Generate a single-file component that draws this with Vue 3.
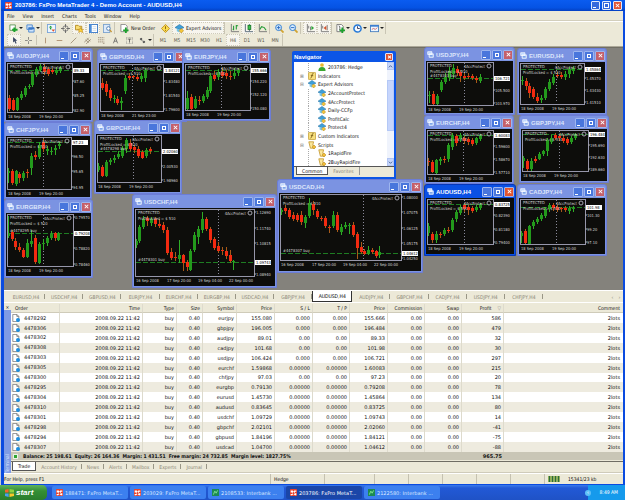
<script setup>
const menus = ['File', 'View', 'Insert', 'Charts', 'Tools', 'Window', 'Help']

const toolGroups = [
  [
    { icon: 'newchart', label: 'New chart', drop: true },
    { icon: 'profiles', label: 'Profiles', drop: true },
  ],
  [
    { icon: 'market', label: 'Market Watch' },
    { icon: 'target', label: 'Data Window' },
    { icon: 'folder', label: 'Navigator', on: true },
    { icon: 'terminal', label: 'Terminal', on: true },
    { icon: 'tester', label: 'Strategy Tester' },
  ],
  [
    { icon: 'order', label: 'New Order', text: 'New Order' },
    { icon: 'diamond', label: 'MetaEditor' },
    { icon: 'expert', label: 'Expert Advisors', text: 'Expert Advisors', on: true },
  ],
  [
    { icon: 'bars', label: 'Bar chart' },
    { icon: 'candles', label: 'Candlesticks', on: true },
    { icon: 'line', label: 'Line chart' },
  ],
  [
    { icon: 'zoomin', label: 'Zoom in' },
    { icon: 'zoomout', label: 'Zoom out' },
  ],
  [
    { icon: 'scroll', label: 'Auto scroll', on: true },
    { icon: 'shift', label: 'Chart shift', on: true },
  ],
  [
    { icon: 'indicator', label: 'Indicators', drop: true },
    { icon: 'clock', label: 'Periods', drop: true },
    { icon: 'template', label: 'Templates', drop: true },
  ],
]

const drawTools = [
  { icon: 'cursor', label: 'Cursor', on: true },
  { icon: 'cross', label: 'Crosshair' },
  { icon: 'sep' },
  { icon: 'vline', label: 'Vertical line' },
  { icon: 'hline', label: 'Horizontal line' },
  { icon: 'trend', label: 'Trendline' },
  { icon: 'channel', label: 'Equidistant channel' },
  { icon: 'fibo', label: 'Fibonacci' },
  { icon: 'text', label: 'Text' },
  { icon: 'label', label: 'Text label' },
  { icon: 'arrows', label: 'Arrows', drop: true },
]
const periods = ['M1', 'M5', 'M15', 'M30', 'H1', 'H4', 'D1', 'W1', 'MN']

// Candle: [x, high, body top, body bottom, low, rising]
const rally = [
  [2, 32, 35, 46, 48, 0], [6, 35, 37, 47, 48, 0], [10, 34, 35, 47, 48, 1], [14, 28, 31, 35, 37, 1],
  [18, 23, 25, 32, 34, 1], [22, 21, 23, 24, 26, 1], [25, 9, 11, 22, 24, 1], [29, 4, 6, 12, 14, 1],
  [33, 1, 3, 7, 9, 1], [37, 1, 4, 9, 12, 0], [41, 4, 6, 11, 13, 0], [45, 5, 7, 9, 11, 0],
  [49, 4, 7, 10, 12, 1], [53, 3, 5, 8, 10, 1],
]

const charts = [
  { name: 'AUDJPY', x: 4, y: 48, w: 89, h: 74, pw: 66, ph: 49, v: 36, q: 7, price: '89.33', labels: ['', '87.60', '85.25', '82.90'], dates: ['18 Sep 2008', '19 Sep 20:00'], candles: rally },
  { name: 'GBPUSD', x: 97, y: 49, w: 90, h: 73, pw: 64, ph: 47, v: 32, q: 6, price: '1.84121', labels: ['', '1.83480', '1.81540', '1.79600'], dates: ['18 Sep 2008', '21 Sep 23:00'],
    candles: [[2, 14, 19, 24, 26, 0], [6, 17, 20, 28, 32, 0], [10, 24, 26, 34, 37, 0], [14, 31, 34, 35, 39, 1], [17, 32, 35, 39, 41, 0], [21, 33, 37, 39, 46, 1], [25, 11, 14, 27, 30, 1], [29, 9, 12, 14, 16, 0], [33, 11, 12, 13, 15, 0], [37, 10, 13, 15, 17, 0], [41, 9, 12, 15, 18, 1], [45, 4, 6, 14, 18, 1]] },
  { name: 'EURJPY', x: 182, y: 49, w: 89, h: 72, pw: 66, ph: 46, v: 36, q: 6, price: '155.666', labels: ['', '154.220', '152.120', '150.080'], dates: ['18 Sep 2008', '19 Sep 20:00'],
    candles: [[2, 27, 34, 45, 47, 1], [6, 30, 33, 45, 46, 0], [10, 32, 35, 44, 45, 1], [14, 32, 36, 37, 41, 0], [18, 30, 32, 37, 39, 1], [22, 23, 26, 33, 35, 1], [25, 9, 12, 27, 29, 1], [29, 7, 11, 15, 17, 0], [33, 5, 8, 13, 16, 1], [37, 4, 8, 12, 14, 0], [41, 6, 9, 12, 15, 0], [45, 7, 12, 13, 16, 0], [49, 4, 9, 12, 15, 1], [53, 4, 6, 9, 12, 1]] },
  { name: 'USDJPY', x: 424, y: 47, w: 91, h: 68, pw: 67, ph: 43, v: 37, q: 16, price: '106.721', tag: '#4478303 buy', labels: ['', '', '105.500', '103.970'], dates: ['18 Sep 2008', '19 Sep 20:00'],
    candles: [[2, 29, 33, 34, 41, 1], [6, 29, 32, 42, 43, 0], [10, 32, 34, 42, 43, 1], [14, 18, 20, 28, 30, 1], [18, 11, 15, 20, 22, 1], [22, 5, 9, 16, 19, 1], [26, 2, 6, 12, 16, 1], [30, 4, 7, 11, 14, 0], [33, 8, 10, 14, 20, 0], [37, 11, 14, 16, 18, 0], [41, 11, 14, 15, 17, 0], [45, 12, 14, 16, 18, 0], [49, 14, 16, 18, 21, 0], [53, 12, 15, 19, 21, 1]] },
  { name: 'EURUSD', x: 517, y: 48, w: 90, h: 67, pw: 65, ph: 41, v: 36, q: 6, price: '1.45864', labels: ['', '1.45370', '1.43430', '1.41510'], dates: ['18 Sep 2008', '19 Sep 20:00'],
    candles: [[2, 13, 17, 18, 22, 1], [6, 15, 18, 23, 27, 0], [9, 20, 23, 30, 35, 0], [13, 24, 26, 34, 36, 0], [17, 30, 34, 38, 40, 0], [21, 32, 35, 37, 40, 1], [25, 24, 26, 35, 37, 1], [29, 16, 19, 26, 28, 1], [33, 11, 14, 20, 22, 1], [37, 9, 12, 13, 15, 0], [41, 9, 12, 14, 16, 0], [45, 8, 11, 14, 17, 1], [49, 4, 6, 11, 15, 1], [53, 3, 5, 8, 11, 1]] },
  { name: 'CHFJPY', x: 4, y: 122, w: 88, h: 77, pw: 65, ph: 52, v: 36, q: 5, price: '97.23', labels: ['', '96.50', '95.65', '94.95'], dates: ['18 Sep 2008', '19 Sep 20:00'],
    candles: [[1, 31, 34, 36, 46, 1], [5, 32, 34, 46, 48, 0], [9, 33, 34, 47, 49, 1], [12, 35, 37, 41, 46, 0], [16, 34, 36, 41, 44, 1], [20, 32, 35, 36, 41, 0], [24, 16, 19, 31, 38, 1], [28, 14, 18, 20, 23, 0], [32, 5, 8, 20, 22, 1], [36, 2, 5, 12, 15, 0], [40, 9, 12, 14, 18, 1], [44, 10, 14, 15, 18, 1], [48, 8, 11, 13, 18, 1], [52, 5, 7, 9, 12, 1]] },
  { name: 'GBPCHF', x: 94, y: 120, w: 88, h: 74, pw: 65, ph: 47, v: 36, q: 16, price: '2.02060', tag: '#4478298 buy', labels: ['', '', '2.00530', '1.98960'], dates: ['18 Sep 2008', '19 Sep 20:00'],
    candles: [[1, 28, 31, 35, 37, 1], [5, 30, 32, 41, 42, 0], [9, 25, 27, 41, 42, 1], [13, 23, 25, 27, 30, 1], [17, 20, 23, 25, 28, 1], [21, 16, 19, 22, 24, 1], [25, 11, 13, 21, 23, 1], [29, 3, 5, 14, 18, 1], [33, 4, 8, 14, 16, 0], [37, 10, 12, 15, 18, 0], [41, 11, 14, 21, 23, 0], [45, 15, 17, 23, 24, 0], [49, 13, 15, 21, 23, 1], [53, 12, 14, 16, 19, 0]] },
  { name: 'EURGBP', x: 4, y: 199, w: 89, h: 79, pw: 67, ph: 52, v: 36, q: 19, price: '0.79208', tag: '#4478295 buy', labels: ['0.79570', '', '0.78820', '0.78460'], dates: ['18 Sep 2008', '19 Sep 20:00'],
    candles: [[1, 2, 19, 22, 24, 1], [5, 16, 18, 25, 27, 0], [8, 24, 27, 33, 36, 0], [12, 29, 33, 36, 38, 0], [16, 34, 36, 43, 44, 0], [20, 25, 29, 43, 44, 1], [24, 16, 27, 30, 33, 1], [28, 21, 24, 48, 50, 0], [32, 28, 30, 49, 50, 1], [36, 25, 29, 30, 36, 1], [40, 22, 24, 29, 32, 1], [44, 17, 20, 24, 26, 1], [48, 18, 19, 24, 27, 0], [51, 18, 19, 26, 27, 1]] },
  { name: 'USDCHF', x: 132, y: 194, w: 145, h: 94, pw: 120, ph: 67, v: 83, q: 53, price: '1.09743', tag: '#4478301 buy', labels: ['1.12690', '1.11740', '1.10815', '', '1.08940'], dates: ['16 Sep 2008', '17 Sep 20:00', '19 Sep 04:00', '22 Sep 00:00'],
    candles: [[1, 30, 32, 36, 39, 1], [4, 16, 18, 32, 34, 1], [8, 7, 10, 18, 20, 1], [12, 7, 9, 12, 17, 0], [16, 8, 10, 14, 17, 1], [20, 8, 10, 15, 18, 0], [24, 10, 15, 17, 19, 0], [28, 13, 16, 21, 24, 0], [32, 18, 21, 44, 46, 0], [36, 39, 43, 49, 51, 0], [40, 43, 48, 49, 52, 0], [44, 31, 46, 50, 54, 1], [48, 45, 46, 54, 62, 0], [52, 51, 53, 58, 62, 0], [55, 40, 42, 61, 62, 1], [59, 23, 26, 41, 43, 1], [63, 17, 20, 28, 35, 1], [67, 3, 10, 21, 24, 1], [71, 8, 10, 20, 22, 0], [75, 18, 20, 31, 34, 0], [79, 28, 30, 39, 41, 0], [83, 33, 37, 42, 44, 0], [87, 38, 41, 42, 46, 0], [91, 38, 42, 47, 50, 0], [95, 41, 46, 52, 54, 0], [98, 51, 52, 53, 61, 1]] },
  { name: 'USDCAD', x: 277, y: 179, w: 146, h: 94, pw: 122, ph: 66, v: 83, q: 59, price: '1.04612', tag: '#4478307 buy', labels: ['1.08000', '1.07075', '1.06125', '1.05175', '1.04250'], dates: ['16 Sep 2008', '17 Sep 20:00', '19 Sep 04:00', '22 Sep 00:00'],
    candles: [[1, 14, 16, 18, 21, 1], [5, 11, 14, 17, 20, 0], [9, 14, 16, 23, 25, 0], [13, 18, 21, 25, 27, 0], [17, 19, 21, 26, 28, 0], [21, 17, 21, 28, 31, 0], [25, 21, 23, 29, 34, 1], [29, 4, 9, 22, 24, 1], [33, 7, 10, 16, 21, 0], [37, 15, 17, 23, 25, 0], [41, 22, 24, 25, 27, 0], [45, 22, 24, 32, 34, 0], [49, 31, 33, 34, 39, 0], [53, 17, 21, 32, 34, 1], [57, 18, 21, 36, 38, 0], [61, 30, 33, 38, 41, 1], [65, 28, 31, 33, 35, 1], [69, 29, 31, 32, 40, 1], [73, 28, 31, 41, 43, 0], [77, 38, 40, 54, 65, 0], [81, 48, 53, 58, 60, 0], [84, 55, 57, 60, 61, 0], [88, 52, 56, 60, 61, 1], [92, 54, 56, 58, 60, 0], [96, 56, 57, 62, 64, 0], [99, 52, 58, 61, 64, 1]] },
  { name: 'EURCHF', x: 424, y: 115, w: 90, h: 69, pw: 67, ph: 44, v: 36, q: 5, price: '1.60083', labels: ['', '1.59600', '1.58670', '1.57710'], dates: ['18 Sep 2008', '19 Sep 20:00'],
    candles: [[1, 28, 31, 32, 36, 0], [5, 30, 32, 42, 43, 0], [9, 29, 30, 43, 44, 1], [13, 27, 29, 31, 35, 1], [17, 26, 29, 30, 33, 0], [21, 13, 15, 29, 32, 1], [25, 3, 6, 17, 20, 1], [29, 4, 6, 13, 16, 0], [33, 3, 5, 9, 12, 1], [37, 6, 8, 11, 14, 0], [41, 7, 9, 12, 15, 0], [45, 8, 10, 14, 16, 0], [49, 7, 8, 13, 15, 1], [53, 4, 6, 9, 11, 1]] },
  { name: 'GBPJPY', x: 519, y: 115, w: 90, h: 68, pw: 67, ph: 41, v: 37, q: 4, price: '196.484', labels: ['', '195.690', '192.630', '189.660'], dates: ['18 Sep 2008', '19 Sep 20:00'],
    candles: [[1, 26, 28, 31, 38, 1], [5, 29, 31, 39, 41, 0], [9, 28, 31, 39, 41, 1], [13, 26, 29, 31, 33, 0], [17, 22, 24, 29, 30, 1], [21, 20, 21, 24, 26, 1], [25, 8, 10, 21, 26, 1], [29, 5, 8, 12, 14, 1], [33, 3, 5, 8, 10, 0], [37, 4, 6, 8, 11, 0], [41, 5, 8, 11, 13, 0], [45, 7, 9, 13, 15, 0], [49, 6, 8, 12, 14, 1], [53, 3, 5, 8, 10, 1]] },
  { name: 'AUDUSD', x: 424, y: 184, w: 92, h: 72, pw: 67, ph: 45, v: 37, q: 5, price: '0.83725', active: true, labels: ['', '0.82390', '0.81180', '0.79400'], dates: ['18 Sep 2008', '19 Sep 20:00'],
    candles: [[1, 24, 27, 34, 37, 1], [5, 33, 35, 41, 44, 0], [9, 32, 35, 41, 44, 1], [13, 33, 35, 36, 39, 0], [17, 29, 31, 35, 37, 1], [21, 28, 31, 32, 34, 0], [25, 19, 21, 31, 33, 1], [29, 11, 13, 20, 23, 1], [33, 6, 8, 14, 16, 1], [37, 4, 6, 10, 13, 0], [41, 6, 8, 11, 16, 0], [45, 7, 9, 12, 14, 0], [49, 6, 8, 11, 13, 1], [53, 4, 6, 9, 11, 1]] },
  { name: 'CADJPY', x: 517, y: 184, w: 90, h: 72, pw: 66, ph: 45, v: 36, q: 8, price: '101.98', labels: ['', '101.30', '99.20', '97.10'], dates: ['18 Sep 2008', '19 Sep 20:00'],
    candles: [[1, 32, 34, 37, 44, 1], [5, 30, 32, 44, 45, 0], [9, 26, 27, 45, 46, 1], [13, 21, 23, 27, 30, 1], [17, 18, 20, 23, 25, 1], [21, 14, 16, 20, 22, 1], [25, 8, 10, 17, 19, 1], [29, 4, 6, 10, 13, 1], [33, 4, 6, 9, 12, 0], [37, 6, 8, 11, 13, 0], [41, 8, 9, 10, 13, 0], [45, 7, 9, 11, 13, 0], [49, 7, 9, 12, 15, 1], [53, 7, 9, 10, 13, 1]] },
]

const frameStyle = (c) => ({ left: c.x - 4 + 'px', top: c.y - 47 + 'px', width: c.w + 'px', height: c.h + 'px' })
const labelY = (c, i) => 4 + Math.round((i * (c.ph - 5)) / (c.labels.length - 1)) + 1

const tree = [
  { level: 2, icon: 'user', text: '203786: Hedge' },
  { level: 1, icon: 'func', text: 'Indicators', sign: '+' },
  { level: 1, icon: 'expert', text: 'Expert Advisors', sign: '-' },
  { level: 2, icon: 'expert', text: '2AccountProtect' },
  { level: 2, icon: 'expert', text: '4AccProtect' },
  { level: 2, icon: 'expert', text: 'Daily-CCFp' },
  { level: 2, icon: 'expert', text: 'ProfitCalc' },
  { level: 2, icon: 'expert', text: 'Protect4' },
  { level: 1, icon: 'func', text: 'Custom Indicators', sign: '+' },
  { level: 1, icon: 'script', text: 'Scripts', sign: '-' },
  { level: 2, icon: 'script', text: '1RapidFire' },
  { level: 2, icon: 'script', text: '2BuyRapidFire' },
]

const chartTabs = ['EURUSD', 'USDCHF', 'GBPUSD', 'EURJPY', 'EURCHF', 'EURGBP', 'USDCAD', 'GBPJPY', 'AUDUSD', 'AUDJPY', 'GBPCHF', 'CADJPY', 'USDJPY', 'CHFJPY']

const columns = ['Order', 'Time', 'Type', 'Size', 'Symbol', 'Price', 'S / L', 'T / P', 'Price', 'Commission', 'Swap', 'Profit', 'Comment']
const orders = [
  ['4478292', 'eurjpy', '155.080', '0.000', '155.666', '586'],
  ['4478306', 'gbpjpy', '196.005', '0.000', '196.484', '479'],
  ['4478302', 'audjpy', '89.01', '0.00', '89.33', '32'],
  ['4478308', 'cadjpy', '101.68', '0.00', '101.98', '30'],
  ['4478303', 'usdjpy', '106.424', '0.000', '106.721', '297'],
  ['4478305', 'eurchf', '1.59868', '0.00000', '1.60083', '215'],
  ['4478300', 'chfjpy', '97.03', '0.00', '97.23', '20'],
  ['4478295', 'eurgbp', '0.79130', '0.00000', '0.79208', '78'],
  ['4478304', 'eurusd', '1.45730', '0.00000', '1.45864', '134'],
  ['4478310', 'audusd', '0.83645', '0.00000', '0.83725', '80'],
  ['4478301', 'usdchf', '1.09729', '0.00000', '1.09743', '14'],
  ['4478298', 'gbpchf', '2.02101', '0.00000', '2.02060', '-41'],
  ['4478294', 'gbpusd', '1.84196', '0.00000', '1.84121', '-75'],
  ['4478307', 'usdcad', '1.04700', '0.00000', '1.04612', '-88'],
]
const rows = orders.map(([id, sym, open, stop, now, profit]) => [
  id, '2008.09.22 11:42', 'buy', '0.40', sym, open, stop, stop, now, '0.00', '0.00', profit, '2lots',
])

const terminalTabs = ['Trade', 'Account History', 'News', 'Alerts', 'Mailbox', 'Experts', 'Journal']
const tasks = [
  { text: '188471: FxPro MetaT...', icon: 'logo' },
  { text: '203029: FxPro MetaT...', icon: 'logo' },
  { text: '2108533: Interbank ...', icon: 'bank' },
  { text: '203786: FxPro MetaT...', icon: 'logo', on: true },
  { text: '2122580: Interbank ...', icon: 'bank' },
]
</script>

<template>
  <svg class="defs" aria-hidden="true">
    <symbol id="logo" viewBox="0 0 10 10"><rect width="10" height="10" rx="1" fill="#e8432e" /><path d="M1 2h3l1 2 1-2h3v2H7v2h2v3H7L5 7 3 9H1V7h2V5H1z" fill="#fff" /><path d="M5 4l2 2-2 2-2-2z" fill="#e8432e" /></symbol>
    <symbol id="bank" viewBox="0 0 10 10"><rect width="10" height="10" fill="#1c8a52" /><path d="M2 8l2-5 2 3 2-4" stroke="#7be08f" stroke-width="1.4" fill="none" /></symbol>
    <symbol id="doc" viewBox="0 0 10 10"><path d="M1 0.5h5l2.500 2.500v6.500h-7.500z" fill="#fff" stroke="#777" /><path d="M6 0.500v2.500h2.500" fill="none" stroke="#777" /><circle cx="7.500" cy="7.500" r="2.500" fill="#1c8ee0" /></symbol>
    <symbol id="windows" viewBox="0 0 10 10"><path d="M0 2l4-1v4H0z" fill="#f2622e" /><path d="M5 1l5 1v3H5z" fill="#8fd33f" /><path d="M0 6h4v4L0 9z" fill="#4aa0f2" /><path d="M5 6h5v3l-5 1z" fill="#f8c82c" /></symbol>
    <symbol id="chartwin" viewBox="0 0 10 10"><path d="M1 1h6v4H1zM3 4h6v5H3z" fill="#b9d5ff" stroke="#fff" /><path d="M4 7h4" stroke="#3563c8" /></symbol>
    <symbol id="newchart" viewBox="0 0 10 10"><path d="M1 1h6v6H1z" fill="#fff" stroke="#5d9457" /><path d="M6 4v5M3.500 6.500h6" stroke="#1ca12c" stroke-width="2.200" /></symbol>
    <symbol id="profiles" viewBox="0 0 10 10"><path d="M1 1h6v5H1zM3 4h6v5H3z" fill="#cfe4fb" stroke="#4b87cf" /><path d="M3 5h6" stroke="#3c78c8" stroke-width="1.500" /></symbol>
    <symbol id="market" viewBox="0 0 10 10"><rect x="0.500" y="0.500" width="9" height="9" fill="#eef6ff" stroke="#78a5d8" /><path d="M2 4l2-2 2 2z" fill="#1d9e33" /><path d="M4 4v2" stroke="#1d9e33" stroke-width="1.500" /><path d="M5 6l2 2.500L9 6z" fill="#e0522b" /></symbol>
    <symbol id="target" viewBox="0 0 10 10"><circle cx="5" cy="5" r="3" fill="none" stroke="#777" /><path d="M5 0v4M5 6v4M0 5h4M6 5h4" stroke="#666" /></symbol>
    <symbol id="folder" viewBox="0 0 10 10"><path d="M0.500 1.500h3l1 1h3v4h-7z" fill="#f8dc73" stroke="#b48b21" /><path d="M6 4l1 2h2.500L8 7.500l1 2-3-1-2 1 .5-2L3 6h2z" fill="#ffd23c" stroke="#b4831c" stroke-width=".6" /></symbol>
    <symbol id="terminal" viewBox="0 0 10 10"><rect x="0.500" y="0.500" width="9" height="9" fill="#fff" stroke="#3877c6" /><path d="M2 0v10" stroke="#4d8edb" stroke-width="2" /><path d="M4 3h4M4 5h4M4 7h4" stroke="#b8cbe2" stroke-width=".7" /></symbol>
    <symbol id="tester" viewBox="0 0 10 10"><rect x="0.500" y="0.500" width="7" height="9" fill="#dbe9f9" stroke="#7ca3cf" /><circle cx="6" cy="5" r="2" fill="#fff" stroke="#477ab5" /><path d="M7.500 6.500l2 2.500" stroke="#c69636" stroke-width="1.500" /></symbol>
    <symbol id="order" viewBox="0 0 10 10"><path d="M1 .5h5l2 2v6H1z" fill="#fff" stroke="#888" /><path d="M6.500 4v6M3.500 7h6" stroke="#1ca12c" stroke-width="2" /></symbol>
    <symbol id="diamond" viewBox="0 0 10 10"><path d="M5 .5L9.500 5 5 9.500.5 5z" fill="#fadc50" stroke="#c1921d" /><path d="M5 2.500v3M5 6.500v1" stroke="#8a5a00" /></symbol>
    <symbol id="expert" viewBox="0 0 10 10"><path d="M0 4l5-3.500L10 4 5 6z" fill="#3f9fd8" stroke="#1e6b9c" stroke-width=".6" /><path d="M2 5v3l3 1.500V6z" fill="#76c6ea" /><path d="M7 5l2.500 2.500L7 10 4.500 7.500z" fill="#f3c73a" stroke="#a87a16" stroke-width=".6" /></symbol>
    <symbol id="func" viewBox="0 0 10 10"><rect x=".5" y=".5" width="9" height="9" rx="1" fill="#f7df7c" stroke="#c29a33" /><path d="M7 2Q5 1.500 5 4T3 8M3.500 4.500h3" fill="none" stroke="#755711" /></symbol>
    <symbol id="script" viewBox="0 0 10 10"><path d="M1 1h6l-1 4 2 4H3L2 5z" fill="#fae69a" stroke="#c3952a" /><path d="M7.500 5L10 7.500 7.500 10 5 7.500z" fill="#f3bd35" stroke="#a87a16" stroke-width=".6" /></symbol>
    <symbol id="user" viewBox="0 0 10 10"><circle cx="5" cy="2.500" r="2.300" fill="#e9b82e" /><path d="M.5 10q0-5 4.500-5t4.500 5z" fill="#3ca831" /></symbol>
    <symbol id="bars" viewBox="0 0 10 10"><path d="M1.500 0v8.500H10" fill="none" stroke="#777" /><path d="M4 2v5M3 6h1M7 1v5M7 2h2" stroke="#249b36" stroke-width="1.200" /></symbol>
    <symbol id="candles" viewBox="0 0 10 10"><path d="M1.500 0v8.500H10M6 0v8" fill="none" stroke="#567" /><rect x="4.500" y="1.500" width="3" height="4.500" fill="#38c64b" stroke="#197a28" /></symbol>
    <symbol id="line" viewBox="0 0 10 10"><path d="M1.500 0v8.500H10" fill="none" stroke="#777" /><path d="M2 6l2-3 3 1 2 3" fill="none" stroke="#249b36" stroke-width="1.200" /></symbol>
    <symbol id="zoomin" viewBox="0 0 10 10"><path d="M6 6l3.500 3.500" stroke="#d1a431" stroke-width="2" /><circle cx="4" cy="4" r="3.300" fill="#d9edff" stroke="#2878d0" /><path d="M4 2v4M2 4h4" stroke="#2266bd" /></symbol>
    <symbol id="zoomout" viewBox="0 0 10 10"><path d="M6 6l3.500 3.500" stroke="#d1a431" stroke-width="2" /><circle cx="4" cy="4" r="3.300" fill="#d9edff" stroke="#2878d0" /><path d="M2 4h4" stroke="#2266bd" /></symbol>
    <symbol id="scroll" viewBox="0 0 10 10"><path d="M1.500 0v8.500H10M3 5V2M5 7V3" fill="none" stroke="#777" /><path d="M6 2l3 2.500L6 7z" fill="#30a53b" /></symbol>
    <symbol id="shift" viewBox="0 0 10 10"><path d="M1.500 0v8.500H10M3 5V2M8 7V1" fill="none" stroke="#777" /><path d="M7 2L4 4.500 7 7z" fill="#d3532c" /></symbol>
    <symbol id="indicator" viewBox="0 0 10 10"><path d="M1 .5h5l2 2v6H1z" fill="#fff" stroke="#777" /><path d="M3 2q2 0 1 5" fill="none" stroke="#555" /><path d="M7 4v6M4 7h6" stroke="#1ca12c" stroke-width="2" /></symbol>
    <symbol id="clock" viewBox="0 0 10 10"><circle cx="5" cy="5" r="4" fill="#f5faff" stroke="#2579d8" stroke-width="1.700" /><path d="M5 2.500V5h2.500" fill="none" stroke="#335" /></symbol>
    <symbol id="template" viewBox="0 0 10 10"><rect x=".5" y="1.500" width="9" height="7" fill="#eef6ff" stroke="#467fc0" /><path d="M0 2h10" stroke="#3d7ed0" stroke-width="2" /><path d="M2 6l2-1 2 1 2-2" fill="none" stroke="#c66" /></symbol>
    <symbol id="cursor" viewBox="0 0 10 10"><path d="M3 0v8l2-2 1.500 3.500L8 9 6.500 5.500H9z" fill="#394560" /></symbol>
    <symbol id="cross" viewBox="0 0 10 10"><path d="M5 0v4M5 6v4M0 5h4M6 5h4" stroke="#666" /></symbol>
    <symbol id="vline" viewBox="0 0 10 10"><path d="M5 1v8" stroke="#9b7652" /></symbol>
    <symbol id="hline" viewBox="0 0 10 10"><path d="M1 5h8" stroke="#9b7652" /></symbol>
    <symbol id="trend" viewBox="0 0 10 10"><path d="M1 9l8-8" stroke="#8b765c" /></symbol>
    <symbol id="channel" viewBox="0 0 10 10"><path d="M0 8l7-7M3 10l7-7M2 4l5 4M4 2l5 4" stroke="#77654d" stroke-width=".8" /></symbol>
    <symbol id="fibo" viewBox="0 0 10 10"><path d="M0 1h9M0 4h9M0 7h9M7 9h3" stroke="#87765f" stroke-dasharray="2 .7" /></symbol>
    <symbol id="text" viewBox="0 0 10 10"><path d="M2 9l3-8 3 8M3 6h4" fill="none" stroke="#555" /></symbol>
    <symbol id="label" viewBox="0 0 10 10"><rect x=".5" y=".5" width="9" height="9" fill="none" stroke="#777" stroke-dasharray="1 1" /><path d="M2.500 3h5M5 3v5" stroke="#444" /></symbol>
    <symbol id="arrows" viewBox="0 0 10 10"><path d="M1 3l2-2 2 2-2 2zM5 7l2-2 2 2-2 2z" fill="#444" /><path d="M3 4l4 3" stroke="#777" /></symbol>
  </svg>

  <main class="desktop">
    <section class="app">
      <header class="titlebar">
        <svg class="ico"><use href="#logo" /></svg>
        <h1>203786: FxPro MetaTrader 4 - Demo Account - AUDUSD,H4</h1>
        <span class="controls">
          <button class="wb min" aria-label="Minimize"></button>
          <button class="wb max" aria-label="Restore"></button>
          <button class="wb close" aria-label="Close"></button>
        </span>
      </header>

      <nav class="menu">
        <button v-for="m in menus" :key="m">{{ m }}</button>
      </nav>

      <div class="toolbar">
        <div v-for="(g, i) in toolGroups" :key="i" class="group">
          <button v-for="t in g" :key="t.icon" class="tool" :class="{ on: t.on, drop: t.drop, wide: t.text }" :aria-label="t.label">
            <svg class="ico"><use :href="'#' + t.icon" /></svg>
            <span v-if="t.text">{{ t.text }}</span>
          </button>
        </div>
      </div>
      <div class="toolbar second">
        <div class="group">
          <template v-for="t in drawTools" :key="t.icon">
            <i v-if="t.icon === 'sep'" class="sep"></i>
            <button v-else class="tool" :class="{ on: t.on, drop: t.drop }" :aria-label="t.label">
              <svg class="ico small"><use :href="'#' + t.icon" /></svg>
            </button>
          </template>
        </div>
        <div class="group periods">
          <button v-for="p in periods" :key="p" class="tool" :class="{ on: p === 'H4' }">{{ p }}</button>
        </div>
      </div>

      <div class="mdi">
        <article v-for="c in charts" :key="c.name" class="win" :class="{ active: c.active }" :style="frameStyle(c)">
          <header class="wintitle">
            <svg class="ico small"><use href="#chartwin" /></svg>
            <h2>{{ c.name }},H4</h2>
            <span class="controls">
              <button class="wb min" aria-label="Minimize"></button>
              <button class="wb max" aria-label="Maximize"></button>
              <button class="wb close" aria-label="Close"></button>
            </span>
          </header>
          <svg class="plot">
            <line :x1="c.v + 1.5" :x2="c.v + 1.5" y1="2" :y2="c.ph" class="vgrid" />
            <line x1="2" :x2="c.pw" :y1="c.q + 1.5" :y2="c.q + 1.5" class="bid" />
            <g v-for="(k, i) in c.candles" :key="i" :class="k[5] ? 'up' : 'down'">
              <line :x1="k[0] + 1.5" :x2="k[0] + 1.5" :y1="k[1] + 1" :y2="k[4] + 1" />
              <rect :x="k[0]" :y="k[2] + 1" width="3" :height="Math.max(1, k[3] - k[2])" />
            </g>
            <rect x="1.5" y="1.5" :width="c.pw - 1" :height="c.ph" class="frame" />
            <text x="4" y="6">PROTECTED</text>
            <text x="4" y="12">ProfitLocked = $ 510</text>
            <text :x="c.pw - 8" y="7" text-anchor="end">4AccProtect</text>
            <circle :cx="c.pw - 4" cy="5" r="2" class="face" />
            <text v-if="c.tag" x="4" :y="c.q">{{ c.tag }}</text>
            <g v-for="(l, i) in c.labels" :key="'l' + i">
              <template v-if="l">
                <line :x1="c.pw" :x2="c.pw + 2" :y1="labelY(c, i) - 1" :y2="labelY(c, i) - 1" class="tick" />
                <text :x="c.pw + 2" :y="labelY(c, i) + 1">{{ l }}</text>
              </template>
            </g>
            <rect :x="c.pw + 1" :y="c.q - 1" width="16" height="5" fill="#fff" />
            <text :x="c.pw + 2" :y="c.q + 3" class="price">{{ c.price }}</text>
            <text v-for="(d, i) in c.dates" :key="d" :x="2 + i * 31" :y="c.ph + 7">{{ d }}</text>
          </svg>
        </article>

        <aside class="navigator">
          <header>
            <h2>Navigator</h2>
            <button class="wb close" aria-label="Close navigator"></button>
          </header>
          <div class="navbody">
            <ul>
              <li v-for="n in tree" :key="n.text" :class="'lv' + n.level">
                <span class="sign">{{ n.sign === '+' ? '⊞' : n.sign ? '⊟' : '' }}</span>
                <svg class="ico"><use :href="'#' + n.icon" /></svg>
                <span>{{ n.text }}</span>
              </li>
            </ul>
            <div class="scroll">
              <button aria-label="Scroll up"><svg viewBox="0 0 6 6"><path d="M1 4l2-2 2 2" /></svg></button>
              <i class="thumb"></i>
              <button aria-label="Scroll down"><svg viewBox="0 0 6 6"><path d="M1 2l2 2 2-2" /></svg></button>
            </div>
          </div>
          <footer><button class="cur">Common</button><button>Favorites</button></footer>
        </aside>
      </div>

      <nav class="charttabs">
        <div class="strip">
          <button v-for="t in chartTabs" :key="t" :class="{ cur: t === 'AUDUSD' }">{{ t }},H4</button>
        </div>
        <button class="arrow">‹</button><button class="arrow">›</button>
      </nav>

      <section class="terminal">
        <div class="side"><button aria-label="Close terminal">×</button><span>Terminal</span></div>
        <div class="panel">
          <table>
            <colgroup><col v-for="(c, i) in columns" :key="i" :class="'c' + i" /></colgroup>
            <thead>
              <tr><th v-for="(c, i) in columns" :key="i">{{ c }}<i v-if="c === 'Profit'">▽</i></th></tr>
            </thead>
            <tbody>
              <tr v-for="r in rows" :key="r[0]">
                <td v-for="(v, i) in r" :key="i"><svg v-if="i === 0" class="ico"><use href="#doc" /></svg>{{ v }}</td>
              </tr>
            </tbody>
            <tfoot>
              <tr>
                <td colspan="11"><i class="bullet"></i>Balance: 25 198.61&nbsp; Equity: 26 164.36&nbsp; Margin: 1 431.51&nbsp; Free margin: 24 732.85&nbsp; Margin level: 1827.75%</td>
                <td>965.75</td>
                <td></td>
              </tr>
            </tfoot>
          </table>
          <nav class="termtabs">
            <button v-for="t in terminalTabs" :key="t" :class="{ cur: t === 'Trade' }">{{ t }}</button>
          </nav>
        </div>
      </section>

      <footer class="status">
        <span class="help">For Help, press F1</span>
        <span class="profile">Hedge</span>
        <span class="s1"></span><span class="s2"></span><span class="s2"></span><span class="s2"></span><span class="s2"></span><span class="s2"></span>
        <span class="traffic">
          <svg viewBox="0 0 12 6"><rect width="12" height="6" fill="#8fae5b" /><path d="M1.500 0v6M4.500 0v6M7.500 0v6M10.500 0v6" stroke="#2c6c3c" /></svg>
          15341/23 kb
        </span>
      </footer>
    </section>

    <footer class="taskbar">
      <button class="start"><svg class="ico"><use href="#windows" /></svg>start</button>
      <button v-for="t in tasks" :key="t.text" class="task" :class="{ on: t.on }">
        <svg class="ico small"><use :href="'#' + t.icon" /></svg><span>{{ t.text }}</span>
      </button>
      <div class="tray"><button aria-label="Show hidden icons">‹</button><time>8:49 AM</time></div>
    </footer>
  </main>
</template>

<style>
body { margin: 0; background: #ece9d8; }
</style>

<style scoped>
.defs { display: none; }
* { box-sizing: border-box; }
button { border: 0; padding: 0; margin: 0; background: none; font: inherit; color: inherit; white-space: nowrap; line-height: 6px; }
h1, h2 { margin: 0; font: bold 6px "Liberation Sans", sans-serif; line-height: 8px; color: #fff; white-space: nowrap; }
ul { list-style: none; margin: 0; padding: 0; }
i { font-style: normal; }
.ico { width: 9px; height: 9px; flex: none; }
.ico.small { width: 7px; height: 7px; }

.desktop { min-height: 100vh; display: flex; flex-direction: column; overflow: hidden; background: #c3cbdb; font: 5px/7px "DejaVu Sans Condensed", "DejaVu Sans", sans-serif; color: #111; }
.app { flex: 1; margin-left: 1px; border: solid #0a4be0; border-width: 0 2px 1px 3px; display: flex; flex-direction: column; background: #ece9d8; }

.titlebar { height: 11px; flex: none; display: flex; align-items: center; gap: 3px; margin: 0 -2px 0 -3px; padding: 0 3px 1px 4px; background: linear-gradient(#0a5cf0, #0553e4 70%, #0440c2); }
.titlebar .ico { width: 7px; height: 7px; }
.controls { margin-left: auto; display: flex; gap: 2px; }
.wb { position: relative; width: 9px; height: 9px; border: 1px solid #dfe8fb; border-radius: 1px; background: #3569dc; flex: none; }
.wb.min::after { content: ""; position: absolute; left: 1px; bottom: 1px; width: 3px; height: 1px; background: #fff; }
.wb.max::after { content: ""; position: absolute; inset: 1px; border: 1px solid #fff; }
.wb.close { background: #df5434; }
.wb.close::before, .wb.close::after { content: ""; position: absolute; left: 3px; top: 1px; width: 1px; height: 5px; background: #fff; transform: rotate(45deg); }
.wb.close::after { transform: rotate(-45deg); }

.menu { height: 10px; flex: none; display: flex; align-items: center; gap: 8px; padding-left: 3px; border-bottom: 1px solid #d2cebc; }
.toolbar { height: 13px; flex: none; display: flex; align-items: center; padding-left: 2px; border-top: 1px solid #fff; }
.toolbar.second { height: 13px; border-top: 0; border-bottom: 1px solid #aca899; color: #5b574c; }
.group { display: flex; align-items: center; height: 12px; border-right: 1px solid #c9c5b4; padding-left: 1px; margin-right: 1px; }
.tool { position: relative; width: 14px; height: 12px; display: flex; align-items: center; justify-content: center; gap: 2px; }
.tool.wide { width: auto; padding: 0 3px; }
.tool.drop { width: 17px; padding-right: 5px; }
.tool.drop::after { content: ""; position: absolute; right: 1px; top: 5px; border: solid transparent; border-width: 2px 2px 0; border-top-color: #222; }
.tool.on { background: #f7f5ee; outline: 1px dotted #cfcbba; outline-offset: -1px; }
.sep { width: 1px; height: 10px; margin: 0 1px; background: #c9c5b4; }

.mdi { position: relative; flex: 1; overflow: hidden; background: #84827c; box-shadow: inset 0 1px #716f64; }
.win { position: absolute; display: flex; flex-direction: column; padding: 0 1px 1px; border: 1px solid #6c7dd6; border-radius: 3px 3px 0 0; background: #7b93e2; }
.win.active { z-index: 1; background: #0a50e4; border-color: #0636b8; }
.wintitle { height: 13px; flex: none; display: flex; align-items: center; gap: 2px; padding-left: 1px; }
.wintitle h2 { color: #dbe5fb; }
.win.active h2 { color: #fff; }
.wintitle .controls { gap: 1px; }
.wintitle .wb { width: 10px; height: 10px; background: #4976dc; border-color: #9db5ee; }
.wintitle .wb.close { background: #c4606b; }
.wintitle .wb.close::before, .wintitle .wb.close::after { left: 4px; }
.active .wintitle .wb.close { background: #e2552f; }
.wintitle .wb.max::after { inset: 2px; }
.plot { flex: 1; width: 100%; min-height: 0; display: block; background: #0d0d0b; }
.plot text { font-size: 4px; fill: #d4d4d4; }
.plot .price { fill: #000; }
.plot .frame { fill: none; stroke: #9696aa; }
.plot .face { fill: none; stroke: #a4a4b0; }
.plot .vgrid { stroke: #8a8a9a; stroke-dasharray: 1 2; }
.plot .bid { stroke: #1e7c22; stroke-dasharray: 5 2; }
.plot .tick { stroke: #aaa; }
.up line { stroke: #2fae26; }
.up rect { fill: #239a1c; }
.down line { stroke: #a85a18; }
.down rect { fill: #f22a10; }

.navigator { position: absolute; left: 288px; top: 4px; width: 104px; height: 128px; display: flex; flex-direction: column; padding: 0 2px 2px; background: #0c55e6; border-radius: 2px 2px 0 0; }
.navigator header { height: 11px; flex: none; display: flex; align-items: center; justify-content: space-between; }
.navigator header .wb { width: 8px; height: 8px; margin-right: 1px; }
.navigator header .wb::before, .navigator header .wb::after { height: 4px; }
.navbody { flex: 1; min-height: 0; display: flex; background: #fff; border-bottom: 1px solid #555; }
.navbody ul { flex: 1; display: grid; grid-auto-rows: 1fr; padding: 1px 0 0 6px; }
.navbody li { display: flex; align-items: center; gap: 2px; min-height: 0; line-height: 6px; }
.navbody .ico { width: 8px; height: 8px; }
.navbody .sign { width: 6px; color: #777; }
.navbody .lv2 .sign { width: 8px; height: 9px; margin: 0 0 0 8px; border-left: 1px dotted #aaa; }
.scroll { width: 7px; display: flex; flex-direction: column; background: #eff3fc; }
.scroll button { height: 8px; background: #c6d6fb; border: 1px solid #b1c4f2; line-height: 0; }
.scroll svg { width: 5px; height: 5px; fill: none; stroke: #38568c; }
.scroll .thumb { height: 51px; margin: 10px 0 auto; background: #c6d5fc; border: 1px solid #b4c8f6; }
.navigator footer { height: 10px; flex: none; display: flex; align-items: start; padding-left: 2px; background: #ece9d8; color: #8c8877; }
.navigator footer button { height: 8px; padding: 0 5px; border-right: 1px solid #999; }
.navigator footer .cur { background: #fff; color: #111; border: 1px solid #555; border-top: 0; }

.charttabs { height: 13px; flex: none; display: flex; align-items: center; padding-left: 3px; border-top: 1px solid #fff; border-bottom: 1px solid #fff; color: #8b8776; }
.strip { flex: 0 1 536px; display: flex; height: 11px; margin-right: auto; }
.strip button { flex: 1; position: relative; }
.strip button::after { content: ""; position: absolute; right: 0; top: 3px; height: 5px; width: 1px; background: #999686; }
.strip .cur { background: #fff; color: #000; border: 1px solid #333; border-top: 0; }
.strip .cur::after { display: none; }
.arrow { width: 7px; }

.terminal { display: flex; flex: none; padding-top: 1px; }
.side { width: 7px; flex: none; display: flex; flex-direction: column; justify-content: space-between; background: #7f9be4; color: #d7e2fc; }
.side button { height: 6px; background: #ece9d8; color: #111; }
.side span { writing-mode: vertical-rl; transform: rotate(180deg); line-height: 7px; }
.panel { flex: 1; min-width: 0; display: flex; flex-direction: column; }
table { width: 100%; height: 156px; table-layout: fixed; border-collapse: separate; border-spacing: 0; background: #fff; font-family: "DejaVu Sans", sans-serif; }
.c0 { width: 49px; } .c1 { width: 83px; } .c2 { width: 34px; } .c3 { width: 26px; } .c4 { width: 34px; }
.c5, .c6 { width: 38px; } .c7 { width: 37px; } .c8 { width: 38px; } .c9, .c10 { width: 37px; } .c11 { width: 42px; }
th, td { padding: 0 2px 0 0; text-align: right; line-height: 8px; white-space: nowrap; border-right: 1px solid #dedbcd; font-weight: normal; vertical-align: middle; }
th { background: #ece9d8; border-bottom: 1px solid #cfcbb9; font-family: "DejaVu Sans Condensed", "DejaVu Sans", sans-serif; }
th i { margin-left: 6px; color: #888; }
th:first-child { text-align: left; padding-left: 4px; }
td:first-child { text-align: left; }
td .ico { width: 8px; height: 8px; margin: 0 4px 0 1px; vertical-align: middle; }
td:last-child, th:last-child { padding-right: 3px; border-right: 0; }
tbody tr:nth-child(even) { background: #eeebdf; }
tfoot td { background: #c9c6b6; border: 0; font: bold 5px "DejaVu Sans", sans-serif; line-height: 8px; }
tfoot td:first-child { font-family: "DejaVu Sans Condensed", "DejaVu Sans", sans-serif; }
.bullet { display: inline-block; width: 5px; height: 5px; margin: 0 5px 0 2px; background: #2fa534; border: 1px solid #e8f3e4; vertical-align: middle; }
.termtabs { height: 12px; display: flex; align-items: start; margin-top: 1px; padding-left: 1px; border-top: 1px solid #6f6d63; border-bottom: 1px solid #cfcbba; color: #8b8776; }
.termtabs button { position: relative; height: 9px; padding: 0 5px; }
.termtabs button::after { content: ""; position: absolute; right: 0; top: 2px; height: 5px; width: 1px; background: #999686; }
.termtabs .cur { background: #fff; color: #111; border: 1px solid #555; border-top: 0; }
.termtabs .cur::after { display: none; }

.status { height: 11px; flex: none; display: flex; align-items: stretch; border-top: 1px solid #fff; line-height: 10px; }
.status span { border-right: 1px solid #c5c1b0; white-space: nowrap; }
.status .help { width: 267px; }
.status .profile { width: 54px; padding-left: 3px; }
.status .s1 { width: 50px; }
.status .s2 { width: 34px; }
.status .traffic { display: flex; align-items: center; gap: 8px; padding-left: 3px; border: 0; }
.traffic svg { width: 12px; height: 6px; }

.taskbar { height: 15px; flex: none; display: flex; align-items: stretch; gap: 2px; background: linear-gradient(#3a7bec, #2259d6 20%, #1f52c6); color: #fff; }
.start { width: 47px; display: flex; align-items: center; gap: 2px; padding-left: 5px; margin-right: 3px; border-radius: 0 5px 5px 0; background: linear-gradient(#5fb35c, #348f35 40%, #2a7d2c); font: italic bold 8px "Liberation Sans", sans-serif; }
.task { flex: 0 1 76px; display: flex; align-items: center; gap: 2px; margin: 1px 0; padding-left: 4px; border-radius: 2px; background: #3c80ef; color: #dbe8ff; font-family: "DejaVu Sans", sans-serif; }
.task.on { background: #1a46a8; color: #fff; }
.tray { margin-left: auto; width: 37px; display: flex; align-items: center; justify-content: space-between; padding-right: 7px; background: #159aec; }
.tray button { width: 6px; height: 6px; margin-left: -3px; border-radius: 50%; background: #5fc0f8; line-height: 5px; }
</style>
